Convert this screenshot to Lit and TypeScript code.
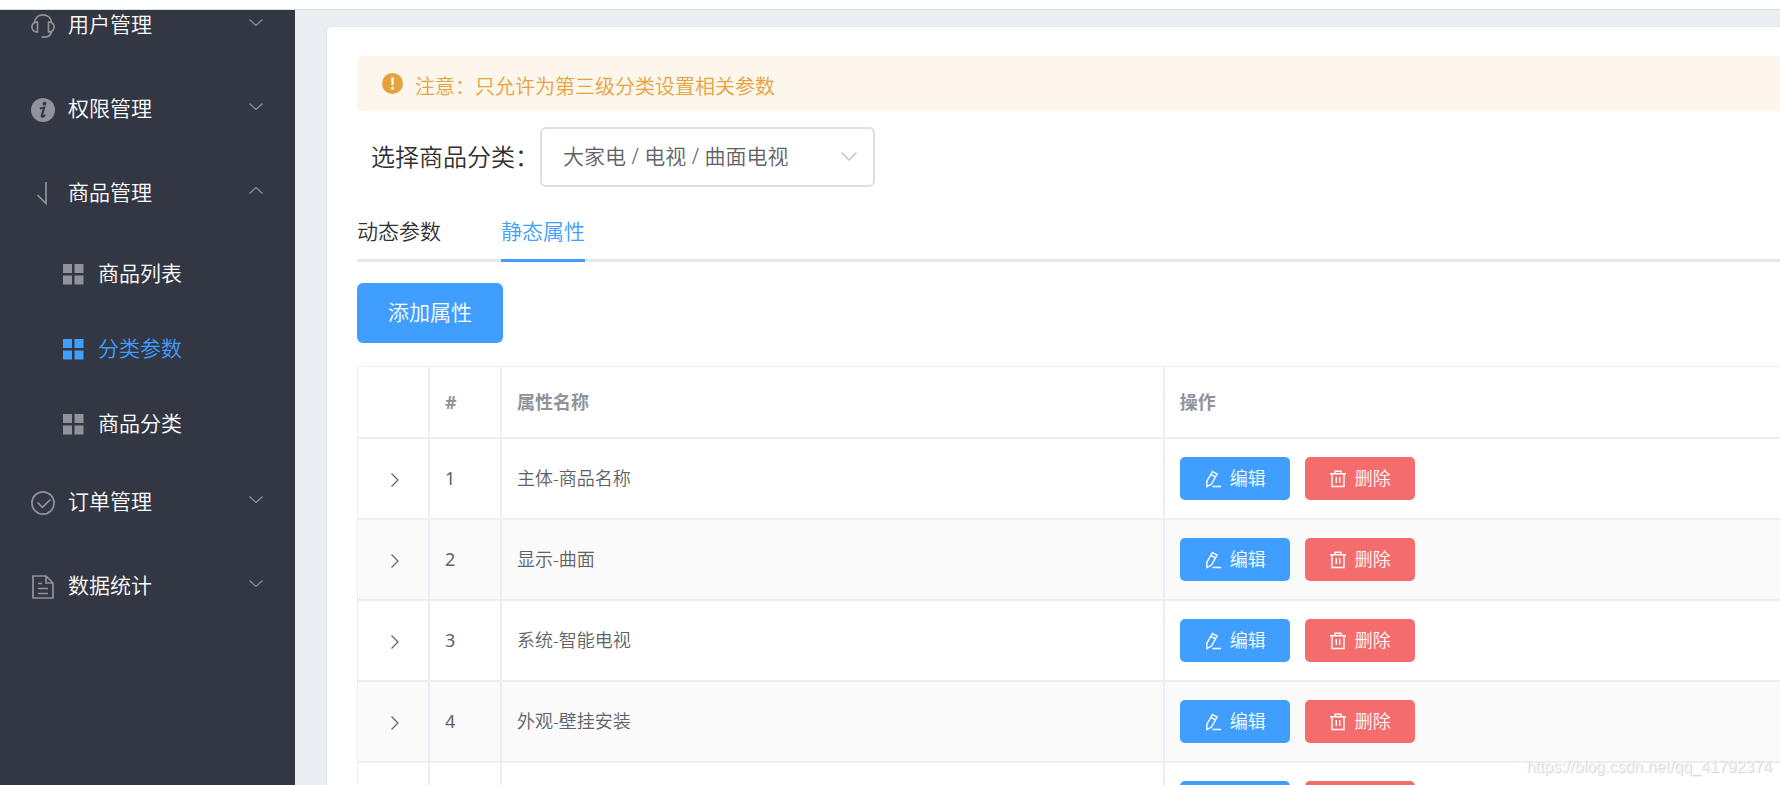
import { LitElement, html, css, svg, nothing } from "lit";
import { customElement, state } from "lit/decorators.js";
import { classMap } from "lit/directives/class-map.js";

interface MenuEntry {
  label: string;
  icon: unknown;
  children?: string[];
}

const headset = svg`
  <path d="M3.500 8.500C4 3.800 7.500.9 12 .9s8 2.900 8.500 7.600" />
  <path d="M6.500 8.200C3 7.600.9 10.200.9 13s2.100 5.400 5.600 4.800z" />
  <path d="M17.500 8.200c3.500-.6 5.600 2 5.600 4.800s-2.100 5.400-5.600 4.800z" />
  <path d="M20.700 17.500c-.8 3.600-3.500 5.600-7.200 5.600h-3" />`;

const info = svg`
  <circle class="solid" cx="12" cy="12" r="12" />
  <circle class="hole" cx="13.500" cy="5.700" r="1.900" />
  <path class="cut" d="M8.800 10.600l4.400-1-2.400 8.200c-.3 1.400.7 1.600 3.400-.8" />`;

const goods = svg`<path d="M15 0v21.500L6.500 13" />`;

const order = svg`
  <circle cx="12" cy="12" r="11.100" />
  <path d="M6.500 11.500l5 4.800 8-7.800" />`;

const report = svg`
  <path d="M2 1h13l7 7v15H2zM15 1v7h7" />
  <path d="M7 8.500h4M7 13.500h10M7 18.500h10" />`;

const menu: MenuEntry[] = [
  { label: "用户管理", icon: headset },
  { label: "权限管理", icon: info },
  { label: "商品管理", icon: goods, children: ["商品列表", "分类参数", "商品分类"] },
  { label: "订单管理", icon: order },
  { label: "数据统计", icon: report },
];

const attributes = [
  "主体-商品名称",
  "显示-曲面",
  "系统-智能电视",
  "外观-壁挂安装",
  "能效-一级能效",
];

@customElement("side-menu")
class SideMenu extends LitElement {
  static styles = css`
    :host {
      display: block;
      background: #333744;
      overflow: hidden;
    }
    * {
      box-sizing: border-box;
    }
    /* The list is scrolled a little way down under the header. */
    .list {
      margin-top: -26px;
    }
    .entry,
    .sub {
      display: flex;
      align-items: center;
      width: 100%;
      border: 0;
      background: none;
      font: inherit;
      font-size: 21px;
      color: #fff;
      text-decoration: none;
      cursor: pointer;
    }
    .entry {
      height: 84px;
      gap: 13px;
      padding: 0 32px 0 31px;
    }
    .sub {
      height: 75px;
      gap: 14px;
      padding: 0 32px 0 62px;
    }
    .sub.active {
      color: #409eff;
    }
    .label {
      flex: 1;
      text-align: left;
    }
    .entry .label {
      padding-bottom: 2px;
    }
    .icon {
      flex: none;
      width: 24px;
      height: 24px;
      fill: none;
      stroke: #909399;
      stroke-width: 1.7;
    }
    .icon .solid {
      fill: #909399;
      stroke: none;
    }
    .icon .hole {
      fill: #333744;
      stroke: none;
    }
    .icon .cut {
      stroke: #333744;
      stroke-width: 2.1;
    }
    .grid {
      flex: none;
      width: 22px;
      height: 22px;
      fill: #909399;
    }
    .active .grid {
      fill: #409eff;
    }
    .arrow {
      flex: none;
      width: 14px;
      height: 15px;
      padding-bottom: 8px;
      fill: none;
      stroke: #909399;
      stroke-width: 1.2;
    }
  `;

  @state() private opened = "商品管理";
  @state() private current = "分类参数";

  private toggle(label: string) {
    this.opened = this.opened === label ? "" : label;
  }

  render() {
    return html`<nav class="list">
      ${menu.map((entry) => {
        const open = this.opened === entry.label;
        return html`
          <button class="entry" aria-expanded=${open} @click=${() => this.toggle(entry.label)}>
            <svg class="icon" viewBox="0 0 24 24" aria-hidden="true">${entry.icon}</svg>
            <span class="label">${entry.label}</span>
            <svg class="arrow" viewBox="0 0 14 7" aria-hidden="true">
              <path d=${open ? "M.5 6.500L7 .5l6.500 6" : "M.5.5L7 6.500l6.500-6"} />
            </svg>
          </button>
          ${open && entry.children
            ? entry.children.map(
                (child) => html`<a
                  href="#"
                  class=${classMap({ sub: true, active: child === this.current })}
                  @click=${() => (this.current = child)}
                >
                  <svg class="grid" viewBox="0 0 22 22" aria-hidden="true">
                    <path d="M1 1h9v9H1zM12.500 1h9v9h-9zM1 12.500h9v9H1zM12.500 12.500h9v9h-9z" />
                  </svg>
                  <span class="label">${child}</span>
                </a>`
              )
            : nothing}
        `;
      })}
    </nav>`;
  }
}

@customElement("attribute-table")
class AttributeTable extends LitElement {
  static styles = css`
    :host {
      display: block;
    }
    * {
      box-sizing: border-box;
    }
    .table {
      width: 100%;
      table-layout: fixed;
      border-collapse: separate;
      border-spacing: 0;
      border: 1px solid #ebeef5;
      border-width: 1px 0 0 1px;
      font-size: 18px;
      color: #606266;
    }
    .narrow {
      width: 72px;
    }
    .name {
      width: 46.6%;
    }
    .cell {
      height: 81px;
      padding: 0 15px;
      border: 0 solid #ebeef5;
      border-width: 0 2px 2px 0;
      text-align: left;
      vertical-align: middle;
    }
    .cell:last-child {
      border-right-width: 0;
    }
    .index {
      font-weight: 400;
    }
    .head {
      height: 72px;
      color: #909399;
      font-weight: 700;
    }
    .row:nth-child(even) {
      background: #fafafa;
    }
    .expand {
      display: flex;
      justify-content: center;
      width: 100%;
      padding: 2px 0 0 4px;
      border: 0;
      background: none;
      cursor: pointer;
    }
    .chevron {
      width: 8px;
      height: 14px;
      fill: none;
      stroke: #606266;
      stroke-width: 1.2;
    }
    .actions {
      display: flex;
      gap: 15px;
    }
    .action {
      display: flex;
      align-items: center;
      gap: 8px;
      height: 43px;
      padding: 0 24px;
      border: 0;
      border-radius: 5px;
      font: inherit;
      color: #fff;
      white-space: nowrap;
      cursor: pointer;
    }
    .edit {
      background: #409eff;
    }
    .delete {
      background: #f56c6c;
    }
    .glyph {
      width: 18px;
      height: 18px;
      fill: none;
      stroke: #fff;
      stroke-width: 1.4;
    }
  `;

  render() {
    return html`<table class="table">
      <colgroup>
        <col class="narrow" />
        <col class="narrow" />
        <col class="name" />
        <col />
      </colgroup>
      <thead>
        <tr>
          <th class="cell head"></th>
          <th class="cell head">#</th>
          <th class="cell head">属性名称</th>
          <th class="cell head">操作</th>
        </tr>
      </thead>
      <tbody>
        ${attributes.map(
          (name, index) => html`<tr class="row">
            <td class="cell">
              <button class="expand" aria-label="展开">
                <svg class="chevron" viewBox="0 0 8 14" aria-hidden="true">
                  <path d="M.5.5L7 7 .5 13.500" />
                </svg>
              </button>
            </td>
            <td class="cell index">${index + 1}</td>
            <td class="cell">${name}</td>
            <td class="cell">
              <div class="actions">
                <button class="action edit">
                  <svg class="glyph" viewBox="0 0 18 18" aria-hidden="true">
                    <path d="M8.500 1.500l4.600 2.600-5.600 9.900-4.600 2.500-.1-5.100zM6.900 4.300l4.600 2.600M8.500 16.500h8.500" />
                  </svg>
                  编辑
                </button>
                <button class="action delete">
                  <svg class="glyph" viewBox="0 0 18 18" aria-hidden="true">
                    <path d="M1 3.700h16M3 3.700v12.800h12V3.700M6 3.500V1.200h6v2.300M7.300 7v6M10.700 7v6" />
                  </svg>
                  删除
                </button>
              </div>
            </td>
          </tr>`
        )}
      </tbody>
    </table>`;
  }
}

@customElement("app-root")
class AppRoot extends LitElement {
  static styles = css`
    :host {
      display: flex;
      flex-direction: column;
      position: relative;
      height: 100vh;
      overflow: hidden;
      background: #eaedf1;
      color: #303133;
      font-family: "Noto Sans", "Noto Sans CJK SC", sans-serif;
      font-weight: 350;
      line-height: 1.5;
    }
    * {
      box-sizing: border-box;
    }
    .topbar {
      flex: none;
      height: 10px;
      background: #fff;
      border-bottom: 1px solid #dcdfe6;
    }
    .body {
      flex: 1;
      display: flex;
      min-height: 0;
    }
    .side {
      flex: none;
      width: 295px;
    }
    .main {
      flex: 1;
      min-width: 0;
      padding: 16px 0 0 31px;
      overflow: hidden;
    }
    .card {
      padding: 29px 0 30px 30px;
      background: #fff;
      border: 1px solid #e4e7ed;
      border-right: 0;
      border-radius: 6px 0 0 6px;
    }
    .notice {
      display: flex;
      align-items: baseline;
      gap: 12px;
      height: 55px;
      padding: 16px 25px 0;
      border-radius: 6px 0 0 6px;
      background: #fdf6ec;
      color: #e6a23c;
      font-size: 20px;
    }
    .mark {
      width: 21px;
      height: 21px;
    }
    .disc {
      fill: #e6a23c;
    }
    .bang {
      fill: #fff;
    }
    .filter {
      display: flex;
      align-items: center;
      margin-top: 16px;
      padding-left: 14px;
    }
    .caption {
      width: 169px;
      font-size: 24px;
      white-space: nowrap;
    }
    .picker {
      position: relative;
      width: 335px;
    }
    .select {
      display: block;
      width: 100%;
      height: 60px;
      padding: 0 44px 0 21px;
      appearance: none;
      border: 2px solid #dcdfe6;
      border-radius: 6px;
      background: #fff;
      font: inherit;
      font-size: 21px;
      color: #606266;
    }
    .caret {
      position: absolute;
      top: 25px;
      right: 18px;
      width: 16px;
      height: 9px;
      fill: none;
      stroke: #c0c4cc;
      stroke-width: 1.5;
      pointer-events: none;
    }
    .tabs {
      display: flex;
      gap: 60px;
      margin: 15px 0 21px;
      box-shadow: inset 0 -3px #e4e7ed;
    }
    .tab {
      height: 60px;
      padding: 0;
      border: 0;
      background: none;
      font: inherit;
      font-size: 21px;
      color: #303133;
      cursor: pointer;
    }
    .tab.active {
      color: #409eff;
      box-shadow: inset 0 -3px #409eff;
    }
    .add {
      display: block;
      height: 60px;
      margin-bottom: 23px;
      padding: 0 31px;
      border: 0;
      border-radius: 6px;
      background: #409eff;
      color: #fff;
      font: inherit;
      font-size: 21px;
      cursor: pointer;
    }
    .watermark {
      position: absolute;
      right: 8px;
      bottom: 8px;
      font-family: "Liberation Sans", sans-serif;
      font-size: 16px;
      line-height: 20px;
      font-weight: 400;
      color: #f4f4f4;
      text-shadow: 1px 1px 1px #d0d0d0;
      pointer-events: none;
    }
  `;

  @state() private tab = "静态属性";

  render() {
    return html`
      <header class="topbar"></header>
      <div class="body">
        <side-menu class="side"></side-menu>
        <main class="main">
          <section class="card">
            <div class="notice" role="alert">
              <svg class="mark" viewBox="0 0 21 21" aria-hidden="true">
                <circle class="disc" cx="10.500" cy="10.500" r="10.500" />
                <path class="bang" d="M9.100 4.500h2.800l-.5 7.700H9.600z" />
                <circle class="bang" cx="10.500" cy="15.200" r="1.500" />
              </svg>
              <span>注意：只允许为第三级分类设置相关参数</span>
            </div>
            <div class="filter">
              <label class="caption" for="category">选择商品分类：</label>
              <div class="picker">
                <select class="select" id="category">
                  <option>大家电 / 电视 / 曲面电视</option>
                </select>
                <svg class="caret" viewBox="0 0 16 9" aria-hidden="true">
                  <path d="M.5.5L8 8l7.500-7.500" />
                </svg>
              </div>
            </div>
            <div class="tabs" role="tablist">
              ${["动态参数", "静态属性"].map(
                (name) => html`<button
                  role="tab"
                  aria-selected=${name === this.tab}
                  class=${classMap({ tab: true, active: name === this.tab })}
                  @click=${() => (this.tab = name)}
                >
                  ${name}
                </button>`
              )}
            </div>
            <button class="add">添加属性</button>
            <attribute-table></attribute-table>
          </section>
        </main>
      </div>
      <div class="watermark">https://blog.csdn.net/qq_41792374</div>
    `;
  }
}
